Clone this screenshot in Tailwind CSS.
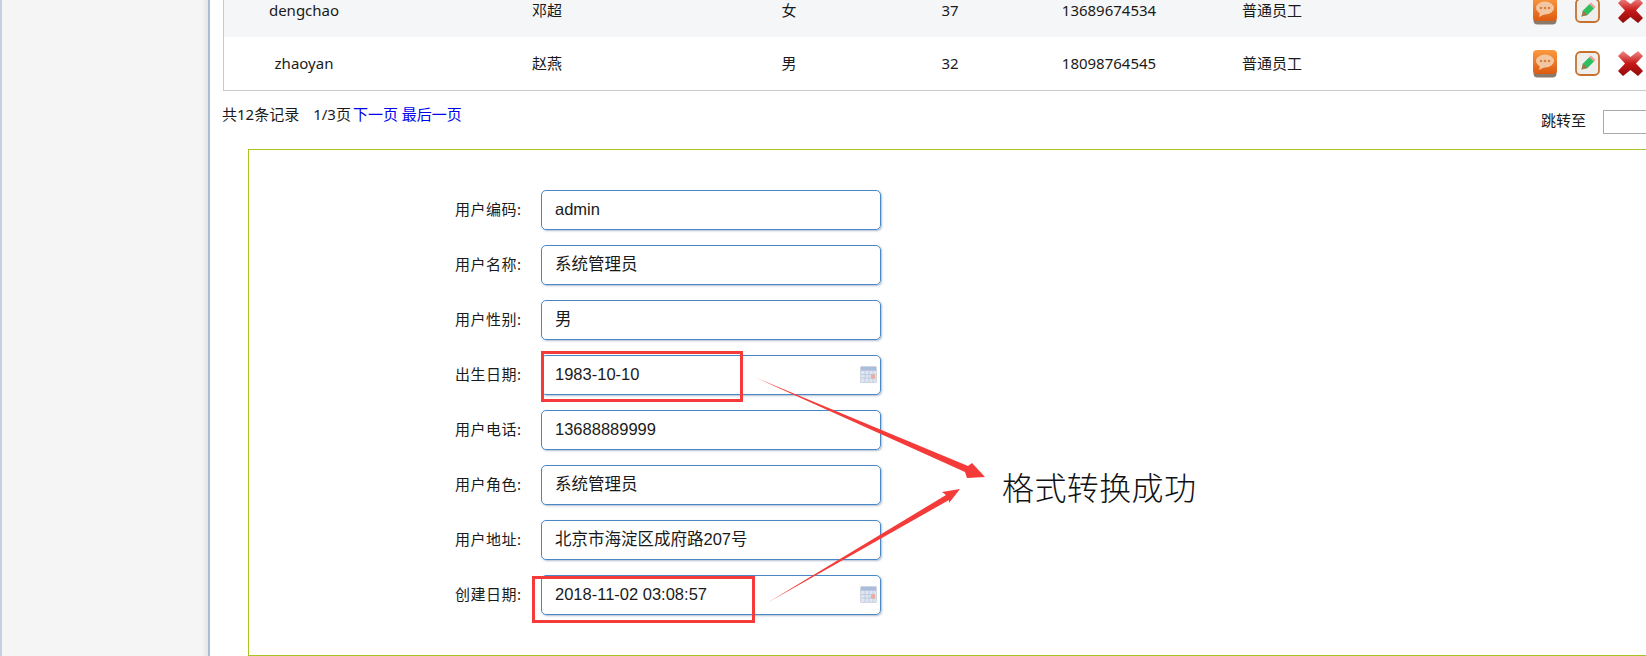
<!DOCTYPE html>
<html lang="zh-CN">
<head>
<meta charset="utf-8">
<title>用户管理</title>
<script src="https://cdn.jsdelivr.net/npm/@tailwindcss/browser@4"></script>
</head>
<body class="bg-white">
<div class="relative flex h-[656px] w-[1646px] overflow-hidden bg-white text-[#1a1a1a] font-['Noto_Sans','Noto_Sans_CJK_SC',sans-serif]">

  <aside class="h-full w-[210px] shrink-0 border-l-2 border-r-2 border-l-[#c5d0e0] border-r-[#a9bdd6] bg-gradient-to-r from-[#f5f5f5] from-[97%] to-[#e6e6e6]"></aside>

  <main class="w-[1436px] shrink-0 pl-[13px]">
    <div class="-mt-4 w-[1480px] border-b border-l border-[#c9c9c9] text-[15px]">
      <div class="grid h-[53px] grid-cols-[160px_326px_158px_164px_154px_172px_1fr] items-center bg-[#f5f6f8] text-center">
        <span>dengchao</span><span>邓超</span><span>女</span><span>37</span><span>13689674534</span><span>普通员工</span>
        <div class="flex items-center gap-[18px] pl-[175px]">
          <svg class="h-[28px] w-[24px] shrink-0" viewBox="0 0 24 28"><defs><linearGradient id="b1" x1="0" y1="0" x2="0" y2="1"><stop offset="0" stop-color="#fb9a3f"/><stop offset="1" stop-color="#dc5a12"/></linearGradient></defs><rect x="0.5" y="3" width="23" height="24.500" rx="4" fill="#8a7a6c"/><rect width="24" height="24" rx="4" fill="url(#b1)"/><ellipse cx="12" cy="11" rx="9" ry="6.5" fill="#f3c6a2"/><path d="M7 15l-1 5 6-3z" fill="#f3c6a2"/><circle cx="8" cy="11" r="1.3" fill="#d9803f"/><circle cx="12" cy="11" r="1.3" fill="#d9803f"/><circle cx="16" cy="11" r="1.3" fill="#d9803f"/></svg>
          <svg class="h-[25px] w-[25px] shrink-0" viewBox="0 0 25 25"><rect x="1" y="1" width="23" height="23" rx="4.5" fill="#eeeeec" stroke="#c6722e" stroke-width="1.8"/><path d="M6.500 18.500l1.500-6 6.500-6.500 4.500 4.500-6.500 6.500z" fill="#2fbf5f"/><path d="M14.500 6l1.500-1.500 4.500 4.500-1.500 1.500z" fill="#ef9a9a"/><path d="M6.500 18.500l1.500-6 4.500 4.500z" fill="#a7744a"/></svg>
          <svg class="h-[25px] w-[25px] shrink-0" viewBox="0 0 25 25"><defs><linearGradient id="x1" x1="0" y1="0" x2="0" y2="1"><stop offset="0" stop-color="#ef8a8a"/><stop offset=".5" stop-color="#c81818"/><stop offset="1" stop-color="#8e0b0b"/></linearGradient></defs><path d="M5 0l7.500 6L20 0l5 5-7 7.500 7 7.500-5 5-7.500-6L5 25l-5-5 7-7.500L0 5z" fill="url(#x1)"/></svg>
        </div>
      </div>
      <div class="grid h-[53px] grid-cols-[160px_326px_158px_164px_154px_172px_1fr] items-center bg-white text-center">
        <span>zhaoyan</span><span>赵燕</span><span>男</span><span>32</span><span>18098764545</span><span>普通员工</span>
        <div class="flex items-center gap-[18px] pl-[175px]">
          <svg class="h-[28px] w-[24px] shrink-0" viewBox="0 0 24 28"><defs><linearGradient id="b2" x1="0" y1="0" x2="0" y2="1"><stop offset="0" stop-color="#fb9a3f"/><stop offset="1" stop-color="#dc5a12"/></linearGradient></defs><rect x="0.5" y="3" width="23" height="24.500" rx="4" fill="#8a7a6c"/><rect width="24" height="24" rx="4" fill="url(#b2)"/><ellipse cx="12" cy="11" rx="9" ry="6.5" fill="#f3c6a2"/><path d="M7 15l-1 5 6-3z" fill="#f3c6a2"/><circle cx="8" cy="11" r="1.3" fill="#d9803f"/><circle cx="12" cy="11" r="1.3" fill="#d9803f"/><circle cx="16" cy="11" r="1.3" fill="#d9803f"/></svg>
          <svg class="h-[25px] w-[25px] shrink-0" viewBox="0 0 25 25"><rect x="1" y="1" width="23" height="23" rx="4.5" fill="#eeeeec" stroke="#c6722e" stroke-width="1.8"/><path d="M6.500 18.500l1.500-6 6.500-6.500 4.500 4.500-6.500 6.500z" fill="#2fbf5f"/><path d="M14.500 6l1.500-1.500 4.500 4.500-1.500 1.500z" fill="#ef9a9a"/><path d="M6.500 18.500l1.500-6 4.500 4.500z" fill="#a7744a"/></svg>
          <svg class="h-[25px] w-[25px] shrink-0" viewBox="0 0 25 25"><defs><linearGradient id="x2" x1="0" y1="0" x2="0" y2="1"><stop offset="0" stop-color="#ef8a8a"/><stop offset=".5" stop-color="#c81818"/><stop offset="1" stop-color="#8e0b0b"/></linearGradient></defs><path d="M5 0l7.500 6L20 0l5 5-7 7.500 7 7.500-5 5-7.500-6L5 25l-5-5 7-7.500L0 5z" fill="url(#x2)"/></svg>
        </div>
      </div>
    </div>

    <div class="flex h-[58px] w-[1440px] items-start justify-between text-[15px]">
      <p class="-ml-px mt-[12px] leading-[22px]">共12条记录<span class="ml-[14px]">1/3页</span><a class="ml-[2px] text-[#0000ee]">下一页</a> <a class="text-[#0000ee]">最后一页</a></p>
      <div class="mt-[18px] flex items-center gap-[17px]">
        <span class="mb-[3px]">跳转至</span>
        <div class="h-[24px] w-[60px] border border-[#aaaaaa] bg-white"></div>
      </div>
    </div>

    <section class="ml-[25px] flex w-[1450px] flex-col gap-[15px] border border-[#a5c626] pb-[40px] pt-[40px]">
      <div class="flex h-[40px] items-center"><label class="mb-[2px] w-[273px] pl-[206px] text-[15px] tracking-[0.5px]">用户编码:</label><div class="ml-[19px] flex h-[40px] w-[340px] items-center rounded-[5px] border border-[#4a87c5] pb-[2px] pl-[13px] font-['Liberation_Sans','Noto_Sans_CJK_SC',sans-serif] text-[16.5px] shadow-[1px_1px_2px_rgba(80,110,150,0.45)]">admin</div></div>
      <div class="flex h-[40px] items-center"><label class="mb-[2px] w-[273px] pl-[206px] text-[15px] tracking-[0.5px]">用户名称:</label><div class="ml-[19px] flex h-[40px] w-[340px] items-center rounded-[5px] border border-[#4a87c5] pb-[2px] pl-[13px] font-['Liberation_Sans','Noto_Sans_CJK_SC',sans-serif] text-[16.5px] shadow-[1px_1px_2px_rgba(80,110,150,0.45)]">系统管理员</div></div>
      <div class="flex h-[40px] items-center"><label class="mb-[2px] w-[273px] pl-[206px] text-[15px] tracking-[0.5px]">用户性别:</label><div class="ml-[19px] flex h-[40px] w-[340px] items-center rounded-[5px] border border-[#4a87c5] pb-[2px] pl-[13px] font-['Liberation_Sans','Noto_Sans_CJK_SC',sans-serif] text-[16.5px] shadow-[1px_1px_2px_rgba(80,110,150,0.45)]">男</div></div>
      <div class="flex h-[40px] items-center"><label class="mb-[2px] w-[273px] pl-[206px] text-[15px] tracking-[0.5px]">出生日期:</label><div class="ml-[19px] flex h-[40px] w-[340px] items-center justify-between rounded-[5px] border border-[#4a87c5] pb-[2px] pl-[13px] pr-[3px] font-['Liberation_Sans','Noto_Sans_CJK_SC',sans-serif] text-[16.5px] shadow-[1px_1px_2px_rgba(80,110,150,0.45)]"><span>1983-10-10</span>
        <svg class="h-[17px] w-[17px]" viewBox="0 0 17 17"><rect width="17" height="17" rx="1.500" fill="#cfd5df"/><rect x="1" y="1" width="15" height="3.500" fill="#a9bddd"/><path d="M1 5h15v11H1z" fill="#dfe6f1"/><path d="M1 8.500h15M1 12h15M5 5v11M9 5v11M13 5v11" stroke="#b8c7dc" stroke-width=".8"/><rect x="11" y="8.500" width="4" height="4" fill="#eeaa9e"/></svg></div></div>
      <div class="flex h-[40px] items-center"><label class="mb-[2px] w-[273px] pl-[206px] text-[15px] tracking-[0.5px]">用户电话:</label><div class="ml-[19px] flex h-[40px] w-[340px] items-center rounded-[5px] border border-[#4a87c5] pb-[2px] pl-[13px] font-['Liberation_Sans','Noto_Sans_CJK_SC',sans-serif] text-[16.5px] shadow-[1px_1px_2px_rgba(80,110,150,0.45)]">13688889999</div></div>
      <div class="flex h-[40px] items-center"><label class="mb-[2px] w-[273px] pl-[206px] text-[15px] tracking-[0.5px]">用户角色:</label><div class="ml-[19px] flex h-[40px] w-[340px] items-center rounded-[5px] border border-[#4a87c5] pb-[2px] pl-[13px] font-['Liberation_Sans','Noto_Sans_CJK_SC',sans-serif] text-[16.5px] shadow-[1px_1px_2px_rgba(80,110,150,0.45)]">系统管理员</div></div>
      <div class="flex h-[40px] items-center"><label class="mb-[2px] w-[273px] pl-[206px] text-[15px] tracking-[0.5px]">用户地址:</label><div class="ml-[19px] flex h-[40px] w-[340px] items-center rounded-[5px] border border-[#4a87c5] pb-[2px] pl-[13px] font-['Liberation_Sans','Noto_Sans_CJK_SC',sans-serif] text-[16.5px] shadow-[1px_1px_2px_rgba(80,110,150,0.45)]">北京市海淀区成府路207号</div></div>
      <div class="flex h-[40px] items-center"><label class="mb-[2px] w-[273px] pl-[206px] text-[15px] tracking-[0.5px]">创建日期:</label><div class="ml-[19px] flex h-[40px] w-[340px] items-center justify-between rounded-[5px] border border-[#4a87c5] pb-[2px] pl-[13px] pr-[3px] font-['Liberation_Sans','Noto_Sans_CJK_SC',sans-serif] text-[16.5px] shadow-[1px_1px_2px_rgba(80,110,150,0.45)]"><span>2018-11-02 03:08:57</span>
        <svg class="h-[17px] w-[17px]" viewBox="0 0 17 17"><rect width="17" height="17" rx="1.500" fill="#cfd5df"/><rect x="1" y="1" width="15" height="3.500" fill="#a9bddd"/><path d="M1 5h15v11H1z" fill="#dfe6f1"/><path d="M1 8.500h15M1 12h15M5 5v11M9 5v11M13 5v11" stroke="#b8c7dc" stroke-width=".8"/><rect x="11" y="8.500" width="4" height="4" fill="#eeaa9e"/></svg></div></div>
    </section>
  </main>

  <svg class="pointer-events-none absolute left-0 top-0" width="1646" height="656" viewBox="0 0 1646 656">
    <rect x="542.500" y="352.500" width="199" height="48" fill="none" stroke="#f53a3a" stroke-width="3"/>
    <rect x="533.500" y="577.500" width="220" height="44" fill="none" stroke="#f53a3a" stroke-width="3"/>
    <polygon points="754,377 968,466 972,463 985,477 967,478 965,472" fill="#f53a3a"/>
    <polygon points="767,603 946,495 942,492 960,489 949,503 949,500" fill="#f53a3a"/>
  </svg>
  <p class="absolute left-[1002px] top-[462px] text-[32px] font-light leading-[48px] tracking-[0.4px] text-[#111] font-['Noto_Sans_CJK_SC',sans-serif]">格式转换成功</p>
</div>
</body>
</html>
